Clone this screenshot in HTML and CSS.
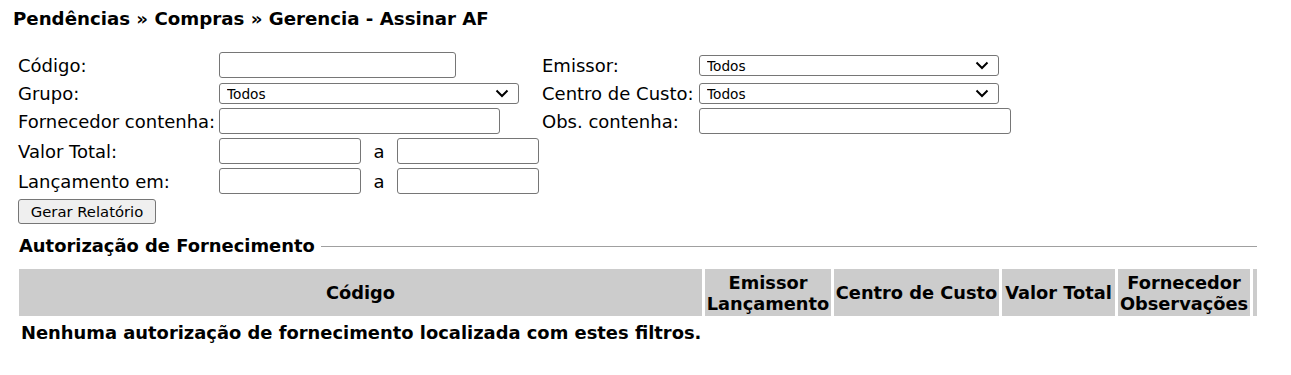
FILE: index.html
```html
<!DOCTYPE html>
<html lang="pt-BR">
<head>
<meta charset="utf-8">
<title>Gerencia - Assinar AF</title>
<link rel="stylesheet" href="styles.css">
</head>
<body>
<h1 class="title">Pendências » Compras » Gerencia - Assinar AF</h1>
<form class="filters">
  <label class="lbl">Código:</label>
  <div class="fld"><input class="inp w-code" type="text"></div>
  <label class="lbl">Emissor:</label>
  <div class="fld"><select class="sel"><option>Todos</option></select></div>

  <label class="lbl">Grupo:</label>
  <div class="fld"><select class="sel"><option>Todos</option></select></div>
  <label class="lbl">Centro de Custo:</label>
  <div class="fld"><select class="sel"><option>Todos</option></select></div>

  <label class="lbl">Fornecedor contenha:</label>
  <div class="fld"><input class="inp w-forn" type="text"></div>
  <label class="lbl">Obs. contenha:</label>
  <div class="fld"><input class="inp w-obs" type="text"></div>

  <label class="lbl">Valor Total:</label>
  <div class="fld range"><input class="inp w-half" type="text"><span class="sep">a</span><input class="inp w-half" type="text"></div>
  <div class="spacer"></div><div class="spacer"></div>

  <label class="lbl">Lançamento em:</label>
  <div class="fld range"><input class="inp w-half" type="text"><span class="sep">a</span><input class="inp w-half" type="text"></div>
  <div class="spacer"></div><div class="spacer"></div>

  <div class="actions"><button class="btn" type="button">Gerar Relatório</button></div>
</form>

<section class="result">
  <div class="legend"><span class="legend-text">Autorização de Fornecimento</span><span class="rule"></span></div>
  <div class="thead">
    <div class="th">Código</div>
    <div class="th">Emissor<br>Lançamento</div>
    <div class="th">Centro de Custo</div>
    <div class="th">Valor Total</div>
    <div class="th">Fornecedor<br>Observações</div>
    <div class="th"></div>
  </div>
  <p class="empty">Nenhuma autorização de fornecimento localizada com estes filtros.</p>
</section>
</body>
</html>
```
FILE: styles.css
```css
html, body {
  margin: 0;
  padding: 0;
  background: #fff;
  color: #000;
  font-family: "DejaVu Sans", Verdana, sans-serif;
}

.title {
  margin: 0;
  padding: 8px 0 0 13px;
  font-size: 18.2px;
  line-height: 22px;
  font-weight: bold;
}

.filters {
  margin: 22px 0 0 18px;
  display: grid;
  grid-template-columns: 201px 323px 157px auto;
  grid-template-rows: 28px 28px 30px 30px 31px 25px;
  align-items: start;
}

.lbl {
  font-size: 18px;
  line-height: 28px;
  white-space: nowrap;
}

.fld {
  display: flex;
  align-items: flex-start;
}

.inp {
  box-sizing: border-box;
  height: 26px;
  margin: 0;
  padding: 1px 3px;
  border: 1px solid #767676;
  border-radius: 3px;
  background: #fff;
  font: 16px "DejaVu Sans", sans-serif;
}

.w-code { width: 237px; }
.w-forn { width: 281px; }
.w-obs { width: 312px; }
.w-half { width: 142px; }

.sep {
  width: 36px;
  text-align: center;
  font-size: 18px;
  line-height: 28px;
}

.sel {
  box-sizing: border-box;
  width: 300px;
  height: 21px;
  margin: 3px 0 0;
  padding: 0 24px 0 7px;
  border: 1px solid #767676;
  border-radius: 3px;
  color: #000;
  font: 13.7px "DejaVu Sans", sans-serif;
  -webkit-appearance: none;
  appearance: none;
  background: #fff url("data:image/svg+xml;utf8,<svg xmlns='http://www.w3.org/2000/svg' width='14' height='9' viewBox='0 0 14 9'><path d='M1.5 1.5 L7 7 L12.5 1.5' fill='none' stroke='black' stroke-width='2'/></svg>") no-repeat right 9px center;
}

.actions {
  grid-column: 1 / -1;
}

.btn {
  box-sizing: border-box;
  width: 138px;
  height: 25px;
  margin: 0;
  padding: 0;
  border: 1px solid #767676;
  border-radius: 3px;
  background: #efefef;
  color: #000;
  font: 14.8px "DejaVu Sans", sans-serif;
}

.result {
  margin: 11px 0 0 19px;
  width: 1238px;
}

.legend {
  display: flex;
  align-items: center;
  gap: 6px;
}

.legend-text {
  font-size: 17.9px;
  line-height: 22px;
  font-weight: bold;
  white-space: nowrap;
}

.rule {
  flex: 1;
  height: 1px;
  background: #a0a0a0;
}

.thead {
  margin-top: 12px;
  display: grid;
  grid-template-columns: 683px 126px 165px 113px 132px 4px;
  column-gap: 3px;
  height: 47px;
}

.th {
  background: #cccccc;
  display: flex;
  align-items: center;
  justify-content: center;
  text-align: center;
  font-size: 17.8px;
  line-height: 21px;
  font-weight: bold;
  white-space: nowrap;
}

.empty {
  margin: 6px 0 0 2px;
  font-size: 17.9px;
  line-height: 22px;
  font-weight: bold;
}
```
